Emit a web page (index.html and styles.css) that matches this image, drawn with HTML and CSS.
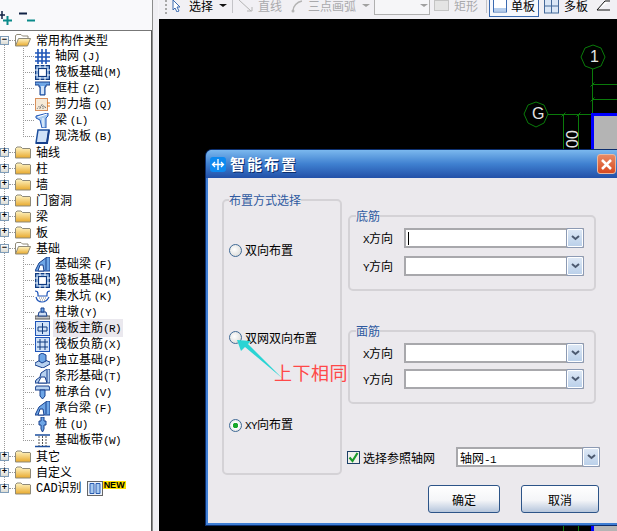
FILE: index.html
```html
<!DOCTYPE html>
<html lang="zh-CN">
<head>
    <meta charset="UTF-8">
    <title>智能布置</title>
    <link rel="stylesheet" href="styles.css">
</head>
<body>

    <svg class="defs" width="0" height="0">
        <defs>
            <linearGradient id="folderFill" x1="0" y1="0" x2="0" y2="1">
                <stop offset="0" stop-color="#fff6c8"/>
                <stop offset="1" stop-color="#e8a92c"/>
            </linearGradient>
            <symbol id="folder" viewBox="0 0 16 16">
                <path d="M.5 14V4.500L2 3h4l1.500 1.500h7.500l.5.500V14z" fill="url(#folderFill)" stroke="#8f8a78"/>
            </symbol>
            <symbol id="folderOpen" viewBox="0 0 16 16">
                <path d="M.5 14V3.500L2 2.500h4l1.500 1.500H13V7" fill="#fff" stroke="#8f8a78"/>
                <path d="M.5 14l3-7.500h12L12.500 14z" fill="url(#folderFill)" stroke="#8f8a78"/>
            </symbol>
            <symbol id="grid" viewBox="0 0 15 15">
                <path d="M0 4h15M0 8h15M0 12h15M3 0v15M7 0v15M11 0v15" stroke="#1f55b8" stroke-width="1.600" fill="none"/>
                <path d="M5 4h.01M9 4h.01M5 8h.01M9 8h.01M5 12h.01M9 12h.01" stroke="#fff" stroke-width="1"/>
            </symbol>
            <symbol id="raft" viewBox="0 0 15 15">
                <rect x=".5" y=".5" width="14" height="14" fill="#9fc0e8" stroke="#0f3a80" stroke-width="1.500"/>
                <rect x="3.500" y="3.500" width="8" height="8" fill="#fff" stroke="#0f3a80" stroke-width="1.200"/>
                <path d="M0 5h3M12 5h3M0 10h3M12 10h3M5 0v3M10 0v3M5 12v3M10 12v3" stroke="#fff"/>
            </symbol>
            <symbol id="column" viewBox="0 0 15 15">
                <path d="M0 1h15v3H11v2H10v8H5V6H4V4H0z" fill="#6ea6e6" stroke="#163f8c"/>
                <path d="M6 5h3v8H6z" fill="#d4e4f8"/>
            </symbol>
            <symbol id="wall" viewBox="0 0 15 15">
                <rect x=".5" y="1.500" width="12" height="12" fill="#f6ead8" stroke="#d8905c"/>
                <path d="M2 12l2-3 1 3 2-5 1 5 2-3 1 3M5 10h1M8 9h1" stroke="#777" stroke-dasharray="1 1" fill="none"/>
                <path d="M12 6h3M12 9h3" stroke="#e07a20"/>
            </symbol>
            <symbol id="beam" viewBox="0 0 15 15">
                <path d="M1 3l12-3v3l-2 2v10H7L5 7 1 5z" fill="#a9cbf0" stroke="#1f55b8"/>
                <path d="M8 5v9M3 4l9-3" stroke="#fff"/>
            </symbol>
            <symbol id="slab" viewBox="0 0 15 15">
                <path d="M3 1h11l-2 13H1z" fill="#cfe1f8" stroke="#1d4f9e" stroke-width="1.500"/>
                <path d="M1 14h11l2-13" fill="none" stroke="#163f8c" stroke-width="2"/>
            </symbol>
            <symbol id="footBeam" viewBox="0 0 15 15">
                <path d="M0 14l4-8 8-6h3v14z" fill="#6ea6e6" stroke="#163f8c"/>
                <path d="M3 14l2-6h3l1 6zM11 1v12" fill="#fff" stroke="#163f8c"/>
            </symbol>
            <symbol id="pit" viewBox="0 0 15 15">
                <path d="M0 2c2 0 3 1 3 3v2h9V5c0-2 1-3 3-3M1 8c1 4 4 5 6 5s5-1 7-5" fill="none" stroke="#1f55b8" stroke-width="1.200"/>
                <path d="M4 9h7M5 11h5" stroke="#888" stroke-dasharray="1 1"/>
            </symbol>
            <symbol id="pier" viewBox="0 0 15 15">
                <path d="M0 11h15v3H0z" fill="#c4c4c4" stroke="#555"/>
                <path d="M3 11l1-4h7l1 4z" fill="#cfe0f5" stroke="#163f8c"/>
                <path d="M6 7V3h3v4z" fill="#6ea6e6" stroke="#163f8c"/>
            </symbol>
            <symbol id="mainBar" viewBox="0 0 15 15">
                <rect x=".5" y=".5" width="14" height="14" fill="#d0e2f8" stroke="#1f55b8"/>
                <path d="M7.500 2v11M3 6h9v4H3z" fill="none" stroke="#0f3a80"/>
            </symbol>
            <symbol id="negBar" viewBox="0 0 15 15">
                <rect x=".5" y=".5" width="14" height="14" fill="#d0e2f8" stroke="#1f55b8"/>
                <path d="M2 5h11M2 10h11M5 2v11M10 2v11" stroke="#0f3a80"/>
            </symbol>
            <symbol id="isolated" viewBox="0 0 15 15">
                <path d="M0 10l7-4 8 3v2l-7 4-8-3z" fill="#b8d2f0" stroke="#163f8c"/>
                <path d="M4 8V2l3-2 4 2v6l-4 2z" fill="#6ea6e6" stroke="#163f8c"/>
            </symbol>
            <symbol id="strip" viewBox="0 0 15 15">
                <path d="M0 14l1-3 4-3 1-4 6-4h3v14z" fill="#b8d2f0" stroke="#163f8c"/>
                <path d="M3 14l3-6h4l2 6zM12 1v12" fill="#fff" stroke="#163f8c"/>
            </symbol>
            <symbol id="cap" viewBox="0 0 15 15">
                <path d="M1 1h13l1 4H0z" fill="#b8d2f0" stroke="#163f8c"/>
                <path d="M5 5h5v6l-2.500 3L5 11z" fill="#6ea6e6" stroke="#163f8c"/>
            </symbol>
            <symbol id="pile" viewBox="0 0 15 15">
                <path d="M6 0h3v4h2v4H9v4l-1.500 3L6 12V8H4V4h2z" fill="#6ea6e6" stroke="#163f8c"/>
            </symbol>
            <symbol id="band" viewBox="0 0 15 15">
                <path d="M0 2h15M0 13.500h15" stroke="#1d4f9e" stroke-width="1.500"/>
                <path d="M4 3v10M7.500 3v10M11 3v10" stroke="#555" stroke-dasharray="2 1"/>
            </symbol>
            <symbol id="chevron" viewBox="0 0 9 6">
                <path d="M1 1l3.500 3L8 1" fill="none" stroke="#4c5a70" stroke-width="2"/>
            </symbol>
        </defs>
    </svg>

    <div class="app">
        <aside class="side">
            <div class="side-tools">
                <svg class="side-tools-icon" width="36" height="16" viewBox="0 0 36 16">
                    <path d="M-2 5h7M2 1v8" stroke="#124" stroke-width="1.500"/>
                    <path d="M3 10.500h9M7.500 6v9" stroke="#0a8a8a" stroke-width="2"/>
                    <path d="M19 3.500h8" stroke="#124" stroke-width="2"/>
                    <path d="M27 10.500h8" stroke="#0a8a8a" stroke-width="2"/>
                </svg>
            </div>
            <div class="tree">
                <div class="row">
                    <span class="toggle">−</span><i class="stub"></i>
                    <svg class="folder"><use href="#folderOpen"/></svg><span class="name">常用构件类型</span>
                </div>
                <div class="children">
                    <div class="row leaf"><i class="stub"></i><svg class="icon"><use href="#grid"/></svg><span class="name">轴网 <b class="key">(J)</b></span></div>
                    <div class="row leaf"><i class="stub"></i><svg class="icon"><use href="#raft"/></svg><span class="name">筏板基础<b class="key">(M)</b></span></div>
                    <div class="row leaf"><i class="stub"></i><svg class="icon"><use href="#column"/></svg><span class="name">框柱 <b class="key">(Z)</b></span></div>
                    <div class="row leaf"><i class="stub"></i><svg class="icon"><use href="#wall"/></svg><span class="name">剪力墙 <b class="key">(Q)</b></span></div>
                    <div class="row leaf"><i class="stub"></i><svg class="icon"><use href="#beam"/></svg><span class="name">梁 <b class="key">(L)</b></span></div>
                    <div class="row leaf"><i class="stub"></i><svg class="icon"><use href="#slab"/></svg><span class="name">现浇板 <b class="key">(B)</b></span></div>
                </div>
                <div class="row"><span class="toggle">+</span><i class="stub"></i><svg class="folder"><use href="#folder"/></svg><span class="name">轴线</span></div>
                <div class="row"><span class="toggle">+</span><i class="stub"></i><svg class="folder"><use href="#folder"/></svg><span class="name">柱</span></div>
                <div class="row"><span class="toggle">+</span><i class="stub"></i><svg class="folder"><use href="#folder"/></svg><span class="name">墙</span></div>
                <div class="row"><span class="toggle">+</span><i class="stub"></i><svg class="folder"><use href="#folder"/></svg><span class="name">门窗洞</span></div>
                <div class="row"><span class="toggle">+</span><i class="stub"></i><svg class="folder"><use href="#folder"/></svg><span class="name">梁</span></div>
                <div class="row"><span class="toggle">+</span><i class="stub"></i><svg class="folder"><use href="#folder"/></svg><span class="name">板</span></div>
                <div class="row">
                    <span class="toggle">−</span><i class="stub"></i>
                    <svg class="folder"><use href="#folderOpen"/></svg><span class="name">基础</span>
                </div>
                <div class="children">
                    <div class="row leaf"><i class="stub"></i><svg class="icon"><use href="#footBeam"/></svg><span class="name">基础梁 <b class="key">(F)</b></span></div>
                    <div class="row leaf"><i class="stub"></i><svg class="icon"><use href="#raft"/></svg><span class="name">筏板基础<b class="key">(M)</b></span></div>
                    <div class="row leaf"><i class="stub"></i><svg class="icon"><use href="#pit"/></svg><span class="name">集水坑 <b class="key">(K)</b></span></div>
                    <div class="row leaf"><i class="stub"></i><svg class="icon"><use href="#pier"/></svg><span class="name">柱墩<b class="key">(Y)</b></span></div>
                    <div class="row leaf"><i class="stub"></i><svg class="icon"><use href="#mainBar"/></svg><span class="name selected">筏板主筋<b class="key">(R)</b></span></div>
                    <div class="row leaf"><i class="stub"></i><svg class="icon"><use href="#negBar"/></svg><span class="name">筏板负筋<b class="key">(X)</b></span></div>
                    <div class="row leaf"><i class="stub"></i><svg class="icon"><use href="#isolated"/></svg><span class="name">独立基础<b class="key">(P)</b></span></div>
                    <div class="row leaf"><i class="stub"></i><svg class="icon"><use href="#strip"/></svg><span class="name">条形基础<b class="key">(T)</b></span></div>
                    <div class="row leaf"><i class="stub"></i><svg class="icon"><use href="#cap"/></svg><span class="name">桩承台 <b class="key">(V)</b></span></div>
                    <div class="row leaf"><i class="stub"></i><svg class="icon"><use href="#footBeam"/></svg><span class="name">承台梁 <b class="key">(F)</b></span></div>
                    <div class="row leaf"><i class="stub"></i><svg class="icon"><use href="#pile"/></svg><span class="name">桩 <b class="key">(U)</b></span></div>
                    <div class="row leaf"><i class="stub"></i><svg class="icon"><use href="#band"/></svg><span class="name">基础板带<b class="key">(W)</b></span></div>
                </div>
                <div class="row"><span class="toggle">+</span><i class="stub"></i><svg class="folder"><use href="#folder"/></svg><span class="name">其它</span></div>
                <div class="row"><span class="toggle">+</span><i class="stub"></i><svg class="folder"><use href="#folder"/></svg><span class="name">自定义</span></div>
                <div class="row">
                    <span class="toggle">+</span><i class="stub"></i>
                    <svg class="folder"><use href="#folder"/></svg><span class="name"><b class="key key-wide">CAD</b>识别</span>
                    <svg class="cad-icon" width="16" height="15" viewBox="0 0 16 15">
                        <rect x=".5" y=".5" width="15" height="14" fill="#eef4fc" stroke="#666"/>
                        <path d="M3 2.500h4v10H3zM9 2.500h4v10H9z" fill="#a8caf0" stroke="#2a5db0"/>
                    </svg>
                    <span class="new-tag">NEW</span>
                </div>
            </div>
        </aside>

        <main class="main">
            <div class="toolbar">
                <span class="grip"></span>
                <svg class="tool-icon cursor" width="9" height="12" viewBox="0 0 9 12">
                    <path d="M1 0v10l2-2 2 4 2-1-2-4h3z" fill="#fff" stroke="#3a6ab0"/>
                </svg>
                <span class="tool tool-select">选择</span>
                <span class="caret"></span>
                <span class="sep"></span>
                <svg class="tool-icon line-icon" width="14" height="13" viewBox="0 0 14 13">
                    <path d="M0 0l12 11M8 11h5V7" fill="none" stroke="#b4b4b4"/>
                </svg>
                <span class="tool off">直线</span>
                <svg class="tool-icon arc-icon" width="12" height="13" viewBox="0 0 12 13">
                    <path d="M2 11C2 6 6 2 11 1" fill="none" stroke="#b4b4b4" stroke-width="1.500"/>
                    <circle cx="2" cy="11" r="1.500" fill="#b4b4b4"/>
                </svg>
                <span class="tool off">三点画弧</span>
                <span class="caret off-caret"></span>
                <span class="tool-box"><span class="caret off-caret"></span></span>
                <svg class="tool-icon rect-icon" width="15" height="11" viewBox="0 0 15 11">
                    <rect x=".5" y=".5" width="14" height="10" fill="#e4e4e4" stroke="#c4c4c4"/>
                </svg>
                <span class="tool off">矩形</span>
                <span class="sep sep-right"></span>
                <span class="tool-active">
                    <svg width="14" height="13" viewBox="0 0 14 13">
                        <rect x=".5" y="-2" width="13" height="14" fill="#fff" stroke="#3a6ab0"/>
                        <path d="M1 8h12v3.500H1z" fill="#b5cdec"/>
                    </svg>
                    <span class="tool">单板</span>
                </span>
                <svg class="tool-icon multi-icon" width="15" height="14" viewBox="0 0 15 14">
                    <rect x=".5" y="-1" width="14" height="14" fill="#dbe7f6" stroke="#456a9a"/>
                    <path d="M7.500 0v13M1 6h13" stroke="#456a9a"/>
                </svg>
                <span class="tool">多板</span>
                <svg class="tool-icon last-icon" width="16" height="14" viewBox="0 0 16 14">
                    <path d="M1 10L9 1h5M1 10h13" fill="#fff" stroke="#111"/>
                </svg>
            </div>

            <div class="canvas">
                <svg class="drawing" width="458" height="512" viewBox="159 19 458 512">
                    <g fill="none" stroke="#0a7a0a">
                        <polygon points="593,45 601,48 605,57 601,66 593,69 585,66 581,57 585,48"/>
                        <polygon points="536,102 544,105 548,114 544,123 536,127 528,123 524,114 528,105"/>
                        <path d="M592.500 69v45M592.500 84.500H617M592.500 99.500H617M548 114.500h44M563.500 114v417M578.500 114v417"/>
                        <path d="M561.500 116.500l4-4M576.500 116.500l4-4M590.500 86.500l4-4M590.500 101.500l4-4"/>
                    </g>
                    <rect x="592.500" y="114.500" width="40" height="430" fill="#b4b4b4" stroke="#0000ff" stroke-width="3"/>
                </svg>
                <span class="axis-label axis-one">1</span>
                <span class="axis-label axis-g">G</span>
                <span class="dim-label">00</span>
            </div>
        </main>
    </div>

    <section class="dialog">
        <header class="dialog-title">
            <svg class="dialog-icon" width="16" height="15" viewBox="0 0 16 15">
                <rect width="16" height="15" rx="3" fill="#0d8af0"/>
                <path d="M8 2v11M2.500 7.500h11M5 5L2.500 7.500 5 10M11 5l2.500 2.500L11 10" fill="none" stroke="#fff" stroke-width="1.300"/>
            </svg>
            <h1>智能布置</h1>
            <span class="close">
                <svg width="13" height="13" viewBox="0 0 13 13">
                    <path d="M2 2l9 9M11 2l-9 9" stroke="#fff" stroke-width="2.500"/>
                </svg>
            </span>
        </header>

        <div class="dialog-body">
            <fieldset class="mode-group">
                <legend>布置方式选择</legend>
                <label class="radio"><input type="radio" name="mode"><span>双向布置</span></label>
                <label class="radio"><input type="radio" name="mode"><span>双网双向布置</span></label>
                <label class="radio"><input type="radio" name="mode" checked><span><b class="key">XY</b>向布置</span></label>
            </fieldset>

            <div class="rebar-col">
                <fieldset class="rebar-group">
                    <legend>底筋</legend>
                    <div class="rebar-row">
                        <span class="rebar-label"><b class="key">X</b>方向</span>
                        <div class="combo"><i class="text-caret"></i><span class="combo-btn"><svg width="9" height="6"><use href="#chevron"/></svg></span></div>
                    </div>
                    <div class="rebar-row">
                        <span class="rebar-label"><b class="key">Y</b>方向</span>
                        <div class="combo"><span class="combo-btn"><svg width="9" height="6"><use href="#chevron"/></svg></span></div>
                    </div>
                </fieldset>

                <fieldset class="rebar-group rebar-top">
                    <legend>面筋</legend>
                    <div class="rebar-row">
                        <span class="rebar-label"><b class="key">X</b>方向</span>
                        <div class="combo"><span class="combo-btn"><svg width="9" height="6"><use href="#chevron"/></svg></span></div>
                    </div>
                    <div class="rebar-row">
                        <span class="rebar-label"><b class="key">Y</b>方向</span>
                        <div class="combo"><span class="combo-btn"><svg width="9" height="6"><use href="#chevron"/></svg></span></div>
                    </div>
                </fieldset>

                <div class="axis-row">
                    <span class="check">
                        <svg width="11" height="11" viewBox="0 0 11 11">
                            <path d="M1.500 5.500l3 3.500 5-8" fill="none" stroke="#1a9a2a" stroke-width="2.200"/>
                        </svg>
                    </span>
                    <span class="axis-text">选择参照轴网</span>
                    <div class="combo combo-axis"><span class="combo-value">轴网<b class="key">-1</b></span><span class="combo-btn"><svg width="9" height="6"><use href="#chevron"/></svg></span></div>
                </div>

                <div class="actions">
                    <button type="button" class="btn-ok">确定</button>
                    <button type="button" class="btn-cancel">取消</button>
                </div>
            </div>
        </div>
    </section>

    <svg class="note-arrow" width="50" height="42" viewBox="236 338 50 42">
        <path d="M237 340l4 11 4-4 37 31-34-34 3-3z" fill="#2ad4d4"/>
    </svg>
    <span class="note-text">上下相同</span>

</body>
</html>
```

FILE: styles.css
```css
* {
    box-sizing: border-box;
}

html,
body {
    margin: 0;
    height: 100%;
}

body {
    position: relative;
    width: 617px;
    height: 531px;
    overflow: hidden;
    font-family: "Noto Sans CJK SC", "Liberation Sans", sans-serif;
    font-size: 12px;
    color: #000;
    background-color: #ebe9ed;
}

.defs {
    display: block;
    height: 0;
}

.key {
    font-family: "Liberation Mono", monospace;
    font-size: 11px;
    font-weight: normal;
    letter-spacing: -0.6px;
}

.key-wide {
    font-size: 12px;
    letter-spacing: 0;
}

.app {
    display: flex;
    height: 531px;
}

/* left tree */

.side {
    width: 159px;
    flex-shrink: 0;
    padding-right: 6px;
    background-color: #efedf1;
    border-right: 1px solid #f6f5f8;
    box-shadow: inset -5px 0 0 #f0eff3, inset -6px 0 0 #8c8c8c;
    display: flex;
    flex-direction: column;
}

.side-tools {
    height: 30px;
    padding-top: 10px;
    background-color: #f9f9fb;
}

.side-tools-icon {
    display: block;
}

.tree {
    flex: 1;
    padding-top: 1px;
    background-color: #fff;
    background-image: repeating-linear-gradient(#999 0 1px, transparent 1px 2px);
    background-repeat: no-repeat;
    background-position: 4px 10px;
    background-size: 1px 448px;
    border-top: 1px solid #777;
    border-right: 1px solid #555;
}

.row {
    display: flex;
    align-items: center;
    height: 16px;
    white-space: nowrap;
    line-height: 16px;
}

.toggle {
    width: 9px;
    height: 9px;
    flex-shrink: 0;
    border: 1px solid #7f9db9;
    background: linear-gradient(#fff, #dcdcd4);
    font-family: "Liberation Mono", monospace;
    font-size: 9px;
    font-weight: bold;
    line-height: 7px;
    text-align: center;
}

.stub {
    width: 6px;
    border-bottom: 1px dotted #999;
    flex-shrink: 0;
}

.folder {
    width: 16px;
    height: 16px;
    flex-shrink: 0;
}

.name {
    margin-left: 5px;
}

.children {
    background-image: repeating-linear-gradient(#999 0 1px, transparent 1px 2px);
    background-repeat: no-repeat;
    background-position: 23px 0;
    background-size: 1px calc(100% - 8px);
}

.leaf {
    padding-left: 23px;
}

.leaf .stub {
    width: 11px;
}

.icon {
    width: 15px;
    height: 15px;
    margin-left: 1px;
    flex-shrink: 0;
}

.selected {
    margin-left: 3px;
    padding: 0 2px;
    background-color: #eae8ee;
}

.cad-icon {
    margin-left: 5px;
    flex-shrink: 0;
}

.new-tag {
    align-self: flex-start;
    margin-top: 1px;
    padding: 0 1px;
    height: 8px;
    background-color: #ffe000;
    font-family: "Liberation Sans", sans-serif;
    font-size: 9px;
    font-weight: bold;
    line-height: 8px;
}

/* top toolbar */

.main {
    flex: 1;
    min-width: 0;
    display: flex;
    flex-direction: column;
}

.toolbar {
    height: 19px;
    display: flex;
    align-items: flex-start;
    background-color: #f1f0f4;
    white-space: nowrap;
    overflow: hidden;
}

.grip {
    width: 2px;
    height: 14px;
    margin-left: 6px;
    background-image: repeating-linear-gradient(#a8a8a8 0 2px, transparent 2px 4px);
}

.tool {
    line-height: 12px;
}

.tool-icon {
    flex-shrink: 0;
}

.cursor {
    margin-left: 5px;
}

.tool-select {
    margin-left: 8px;
}

.off {
    color: #a9a9ac;
    margin-left: 5px;
}

.caret {
    width: 0;
    height: 0;
    margin: 4px 0 0 6px;
    border-left: 4px solid transparent;
    border-right: 4px solid transparent;
    border-top: 3px solid #111;
}

.off-caret {
    border-top-color: #a0a0a0;
}

.sep {
    width: 1px;
    height: 13px;
    margin-left: 5px;
    background-color: #c4c4c8;
}

.line-icon {
    margin-left: 6px;
}

.arc-icon {
    margin-left: 9px;
}

.tool-box {
    width: 56px;
    height: 15px;
    margin-left: 4px;
    padding-right: 1px;
    display: flex;
    justify-content: flex-end;
    border: 1px solid #b0b0b0;
    border-top: none;
    background-color: #f6f6f8;
}

.rect-icon {
    margin-left: 4px;
}

.sep-right {
    margin-left: 8px;
}

.tool-active {
    width: 50px;
    height: 17px;
    margin-left: 2px;
    padding-left: 3px;
    display: flex;
    align-items: flex-start;
    gap: 4px;
    border: 1px solid #3a6ab0;
    border-top: none;
    background-color: #f6f8fc;
}

.multi-icon {
    margin-left: 5px;
    margin-right: 5px;
}

.last-icon {
    margin-left: 8px;
}

/* black drawing area */

.canvas {
    flex: 1;
    position: relative;
    background-color: #000;
    overflow: hidden;
}

.drawing {
    display: block;
}

.axis-label {
    position: absolute;
    color: #e4e4e4;
    font-family: "Liberation Sans", sans-serif;
    font-size: 16px;
    line-height: 16px;
}

.axis-one {
    left: 431px;
    top: 30px;
}

.axis-g {
    left: 373px;
    top: 87px;
}

.dim-label {
    position: absolute;
    left: 405px;
    top: 112px;
    color: #e4e4e4;
    font-family: "Liberation Sans", sans-serif;
    font-size: 16px;
    line-height: 16px;
    transform: rotate(-90deg);
}

/* dialog */

.dialog {
    position: absolute;
    left: 206px;
    top: 150px;
    width: 420px;
    height: 375px;
    background-color: #ebe9ed;
    border: 2px solid #3f7ed4;
    border-top: none;
    border-radius: 6px 6px 0 0;
    box-shadow: 0 0 0 1px #0d2f6e;
}

.dialog-title {
    height: 28px;
    margin: 0 -2px;
    padding: 7px 0 0 4px;
    display: flex;
    align-items: flex-start;
    border-radius: 6px 6px 0 0;
    background: linear-gradient(#7bb8ee, #3f80d0 50%, #2250a8);
}

.dialog-icon {
    flex-shrink: 0;
}

.dialog-title h1 {
    margin: -1px 0 0 4px;
    color: #fff;
    font-size: 15px;
    font-weight: bold;
    line-height: 16px;
    letter-spacing: 2px;
    text-shadow: 1px 1px 0 #0d2f6e;
}

.close {
    width: 19px;
    height: 20px;
    margin: -3px 0 0 299px;
    display: flex;
    align-items: center;
    justify-content: center;
    border: 1px solid #e8b8a0;
    border-radius: 3px;
    background: linear-gradient(#e88a64, #d84a20);
}

.dialog-body {
    display: grid;
    grid-template-columns: 120px 252px;
    column-gap: 6px;
    padding: 15px 0 0 14px;
}

fieldset {
    margin: 0;
    border: 2px solid #d4d2d6;
    border-radius: 5px;
}

legend {
    padding: 0;
    color: #2f5aa0;
    font-size: 12px;
    line-height: 14px;
}

.mode-group {
    height: 282px;
    padding: 36px 0 0 5px;
    display: flex;
    flex-direction: column;
    gap: 73.5px;
}

.radio {
    height: 14px;
    display: flex;
    align-items: center;
    gap: 3px;
    white-space: nowrap;
}

.radio span {
    line-height: 14px;
}

.radio input {
    appearance: none;
    width: 13px;
    height: 13px;
    margin: 0;
    flex-shrink: 0;
    border: 1px solid #3f6a96;
    border-radius: 50%;
    background: radial-gradient(circle at 40% 40%, #fff, #d4d4d0);
}

.radio input:checked {
    background: radial-gradient(circle, #1aa82a 0 2.500px, #fff 3px, #d4d4d0);
}

.rebar-col {
    padding-top: 16px;
    display: flex;
    flex-direction: column;
}

.rebar-group {
    width: 248px;
    height: 82px;
    padding: 5px 10px 0 13px;
    display: flex;
    flex-direction: column;
    gap: 8px;
}

.rebar-group legend {
    margin-left: -7px;
}

.rebar-top {
    height: 80px;
    margin-top: 33px;
    padding-top: 5px;
    gap: 6px;
}

.rebar-row {
    display: flex;
    align-items: center;
    justify-content: space-between;
}

.rebar-label {
    padding-bottom: 2px;
    white-space: nowrap;
}

.combo {
    width: 180px;
    height: 20px;
    padding-left: 2px;
    display: flex;
    align-items: center;
    border: 2px solid #a8a8ac;
    background-color: #fff;
}

.text-caret {
    width: 1px;
    height: 13px;
    background-color: #000;
}

.combo-btn {
    width: 18px;
    height: 20px;
    margin: -2px -2px -2px auto;
    flex-shrink: 0;
    display: flex;
    align-items: center;
    justify-content: center;
    border: 1px solid #8c9ab4;
    border-radius: 2px;
    background: linear-gradient(#dfe9f6, #b9cfe9);
    box-shadow: inset 0 0 0 1px #fff;
}

.axis-row {
    width: 252px;
    margin-top: 43px;
    display: flex;
    align-items: center;
}

.check {
    width: 13px;
    height: 13px;
    margin-left: -1px;
    display: flex;
    align-items: center;
    justify-content: center;
    border: 1px solid #1d4068;
    background-color: #f0f0ea;
}

.axis-text {
    margin-left: 3px;
    white-space: nowrap;
}

.combo-axis {
    width: 144px;
    margin-left: 21px;
    flex-shrink: 0;
}

.actions {
    margin-top: 18px;
    padding-left: 80px;
    display: flex;
    gap: 21px;
}

.actions button {
    height: 28px;
    padding: 0;
    font-family: inherit;
    font-size: 12px;
    color: #000;
    border: 1px solid #2c5488;
    border-radius: 3px;
    background: linear-gradient(#fff, #f4f5f8 55%, #b6c6dc);
}

.btn-ok {
    width: 72px;
}

.btn-cancel {
    width: 78px;
}

/* annotation drawn over the dialog */

.note-arrow {
    position: absolute;
    left: 236px;
    top: 338px;
}

.note-text {
    position: absolute;
    left: 274px;
    top: 361px;
    color: #ff4848;
    font-size: 18px;
    line-height: 22px;
    letter-spacing: 0.5px;
    white-space: nowrap;
}
```
